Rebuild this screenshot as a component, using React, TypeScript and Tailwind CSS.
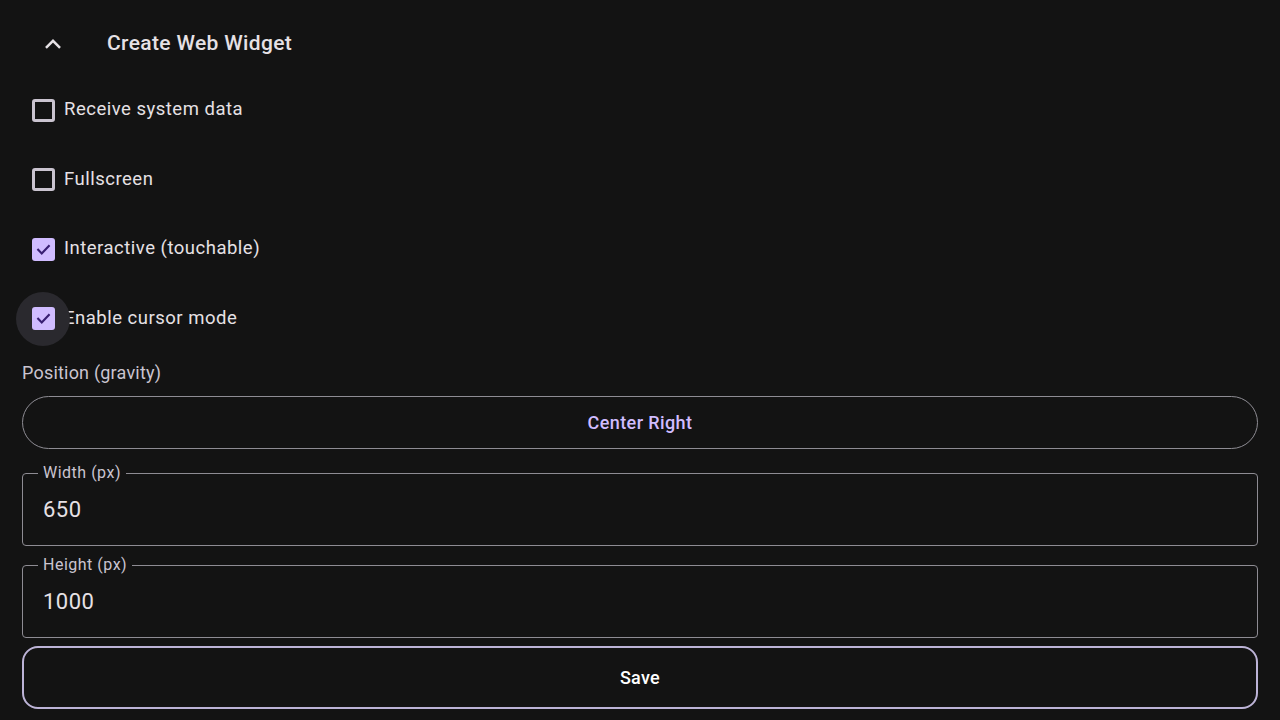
import React, { useState } from "react";

interface CheckRowProps {
  label: string;
  checked: boolean;
  focused?: boolean;
  onToggle: () => void;
}

const CheckRow: React.FC<CheckRowProps> = ({ label, checked, focused, onToggle }) => {
  return (
    <div className="flex items-center h-[48px] cursor-pointer" onClick={onToggle}>
      <div className="relative w-[42px] h-[48px] flex items-center justify-center">
        {focused && (
          <div className="absolute left-[-6px] top-[-3px] w-[54px] h-[54px] rounded-full bg-[#2a292e]" />
        )}
        {checked ? (
          <div className="relative w-[23px] h-[23px] rounded-[3px] bg-[#d0bcff] flex items-center justify-center">
            <svg width="17" height="17" viewBox="0 0 24 24" fill="none">
              <path d="M4.5 12.5l5 5L19.5 7" stroke="#381e72" strokeWidth="3" strokeLinecap="square" />
            </svg>
          </div>
        ) : (
          <div className="relative w-[23px] h-[23px] rounded-[3px] border-[3px] border-[#cac4d0]" />
        )}
      </div>
      <span className="text-[18.5px] text-[#e6e1e5] tracking-[0.5px]">{label}</span>
    </div>
  );
};

interface FieldProps {
  label: string;
  value: string;
}

const OutlinedField: React.FC<FieldProps> = ({ label, value }) => {
  return (
    <div className="relative h-[73px] rounded-[4px] border border-[#8e8c93] flex items-center px-[20px]">
      <span className="absolute left-[15px] top-[-10px] px-[5px] bg-[#131313] text-[16px] leading-[18px] text-[#cac4d0] tracking-[0.5px]">
        {label}
      </span>
      <span className="text-[22px] text-[#e6e1e5] tracking-[0.5px] mt-[1px]">{value}</span>
    </div>
  );
};

export default function App() {
  const [opts, setOpts] = useState([false, false, true, true]);
  const labels = ["Receive system data", "Fullscreen", "Interactive (touchable)", "Enable cursor mode"];

  const toggle = (i: number) => {
    setOpts(opts.map((v, j) => (j === i ? !v : v)));
  };

  return (
    <div className="w-[1280px] h-[720px] overflow-hidden bg-[#131313] font-['Roboto',sans-serif]">
      <div className="flex items-center h-[86px] pt-[2px]">
        <div className="ml-[29px] w-[48px] h-[48px] flex items-center justify-center">
          <svg width="26" height="26" viewBox="0 0 24 24" fill="none">
            <path d="M5.5 15.5l6.5-6.5 6.5 6.5" stroke="#e6e1e5" strokeWidth="2.3" />
          </svg>
        </div>
        <span className="ml-[30px] text-[21px] font-medium text-[#e6e1e5] tracking-[0.35px]">Create Web Widget</span>
      </div>

      <div className="px-[22px] flex flex-col gap-[21.5px]">
        {labels.map((l, i) => (
          <CheckRow key={l} label={l} checked={opts[i]} focused={i === 3} onToggle={() => toggle(i)} />
        ))}
      </div>

      <div className="px-[22px] flex flex-col">
        <div className="mt-[18px] h-[24px] flex items-center text-[18px] text-[#cac4d0] tracking-[0.2px]">
          Position (gravity)
        </div>
        <button className="mt-[11px] h-[53px] rounded-full border border-[#8e8c93] flex items-center justify-center text-[18px] font-medium text-[#d0bcff] tracking-[0.4px]">
          Center Right
        </button>
        <div className="mt-[24px]">
          <OutlinedField label="Width (px)" value="650" />
        </div>
        <div className="mt-[19px]">
          <OutlinedField label="Height (px)" value="1000" />
        </div>
        <button className="mt-[8px] h-[63px] rounded-[16px] border-2 border-[#bcb3d6] flex items-center justify-center text-[18px] font-medium text-white tracking-[0.3px]">
          Save
        </button>
      </div>
    </div>
  );
}
